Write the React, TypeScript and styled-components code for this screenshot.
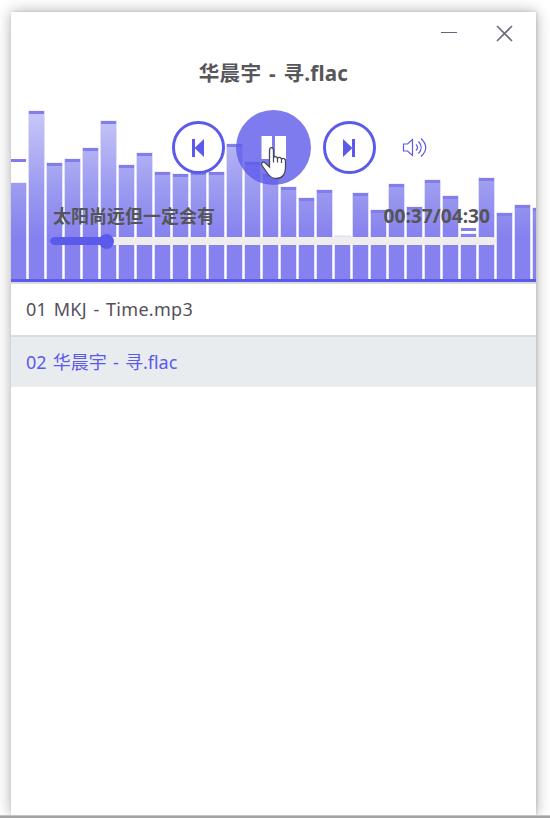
import React from "react";
import styled, { createGlobalStyle } from "styled-components";

const GlobalStyle = createGlobalStyle`
  * { box-sizing: border-box; }
  html, body { margin: 0; background: #fff; overflow: hidden; }
  body { font-family: "Noto Sans", "Noto Sans CJK SC", sans-serif; }
`;

const Desktop = styled.main`
  height: 818px;
  padding: 12px 14px 0 11px;
  overflow: hidden;
  background: #fff;
`;

const PlayerWindow = styled.section`
  height: 803px;
  display: flex;
  flex-direction: column;
  background: #fff;
  box-shadow: 0 0 14px rgba(0, 0, 0, 0.32), 1px 0 3px rgba(0, 0, 0, 0.12);
`;

const TaskEdge = styled.div`
  position: relative;
  height: 3px;
  margin: 0 -14px 0 -11px;
  background: linear-gradient(#c4c4c4 0 1px, #a3a3a3 1px 3px);
`;

const Stage = styled.header`
  position: relative;
  height: 272px;
  flex: none;
  display: flex;
  flex-direction: column;
  border-bottom: 2px solid #dcdcdc;
`;

const Spectrum = styled.svg`
  position: absolute;
  left: 0;
  top: 0;
  width: 525px;
  height: 270px;
`;

const TitleBar = styled.div`
  height: 42px;
  display: flex;
  justify-content: flex-end;
  align-items: center;
  gap: 39px;
  padding-right: 23px;
`;

const WindowButton = styled.button`
  width: 17px;
  height: 17px;
  padding: 0;
  border: 0;
  background: none;
  svg { display: block; }
`;

const Title = styled.h1`
  margin: 0;
  height: 40px;
  line-height: 39px;
  text-align: center;
  font-size: 20.6px;
  font-weight: 700;
  letter-spacing: 0.2px;
  word-spacing: 2.2px;
  color: #57575b;
  white-space: nowrap;
`;

const Controls = styled.div`
  position: relative;
  height: 75px;
  margin-top: 16px;
  display: flex;
  align-items: center;
  gap: 12px;
  padding-left: 161px;
`;

const SkipButton = styled.button`
  width: 52.5px;
  height: 52.5px;
  padding: 0;
  border: 3px solid #5c5aea;
  border-radius: 50%;
  background: #fff;
  svg { display: block; }
`;

const PlayButton = styled.button`
  width: 75px;
  height: 75px;
  margin-left: -0.5px;
  padding: 0;
  border: 0;
  border-radius: 50%;
  background: rgba(92, 90, 234, 0.8);
  svg { display: block; }
`;

const Volume = styled.svg`
  margin-left: 14px;
`;

const Status = styled.div`
  position: relative;
  height: 26px;
  margin-top: 18px;
  padding: 0 46px 0 42px;
  display: flex;
  justify-content: space-between;
  line-height: 26px;
  font-size: 18px;
  font-weight: 700;
  color: #555559;
  white-space: nowrap;
`;

const Lyric = styled.span``;
const Clock = styled.span`
  font-size: 19.2px;
  line-height: 25px;
`;

const Track = styled.div`
  position: relative;
  width: 446px;
  height: 8px;
  margin: 8px 0 0 39px;
  display: flex;
  align-items: center;
  border-radius: 4px;
  background: #eee;
`;

const Played = styled.div`
  width: 57px;
  height: 8px;
  border-radius: 4px;
  background: #5c5aea;
`;

const Thumb = styled.div`
  width: 15px;
  height: 15px;
  margin-left: -8px;
  border-radius: 50%;
  background: #5c5aea;
`;

const Playlist = styled.ul`
  margin: 0;
  padding: 0;
  list-style: none;
`;

const Song = styled.li<{ $active?: boolean }>`
  height: ${(p) => (p.$active ? 50 : 53)}px;
  line-height: ${(p) => (p.$active ? 50 : 51)}px;
  padding-left: 15px;
  border-bottom: ${(p) => (p.$active ? "0" : "2px solid #dcdcdc")};
  font-size: 18px;
  letter-spacing: ${(p) => (p.$active ? 0 : 0.3)}px;
  word-spacing: 1.5px;
  white-space: nowrap;
  color: ${(p) => (p.$active ? "#5c5aea" : "#55505a")};
  background: ${(p) => (p.$active ? "#e8ecef" : "#fff")};
`;

const peaks = [
  147, 99, 151, 147, 136, 109, 153, 141, 160, 162, 160, 160, 132, 150, 162,
  175, 186, 178, 224, 181, 198, 172, 195, 168, 184, 216, 166, 201, 193, 196,
];
const fallen: Record<number, number> = { 0: 171, 25: 222 };

function SpectrumBars() {
  return (
    <Spectrum viewBox="0 0 525 270">
      <defs>
        <linearGradient id="bar" gradientUnits="userSpaceOnUse" x1="0" y1="99" x2="0" y2="226">
          <stop offset="0" stopColor="#c8c8f8" />
          <stop offset="0.6" stopColor="#9d9bf0" />
          <stop offset="1" stopColor="#8681ee" />
        </linearGradient>
      </defs>
      {peaks.map((peak, i) => {
        const top = fallen[i] ?? peak;
        return (
          <g key={i}>
            <rect x={i * 18 - 1} y={top - 0.5} width="17" height={268 - top} fill="#e0dffb" />
            {i !== 18 && <rect x={i * 18} y={top} width="15" height={268 - top} fill="url(#bar)" />}
            {i === 18 && <rect x={i * 18} y={top + 2} width="15" height={266 - top} fill="url(#bar)" />}
            {i !== 18 && <rect x={i * 18} y={peak} width="15" height="3" fill="#817eec" />}
          </g>
        );
      })}
      <rect y="267" width="525" height="3" fill="#5c5aea" />
    </Spectrum>
  );
}

export default function App() {
  return (
    <>
      <GlobalStyle />
      <Desktop>
        <PlayerWindow>
          <Stage>
            <SpectrumBars />
            <TitleBar>
              <WindowButton aria-label="Minimize">
                <svg width="17" height="17" stroke="#66647c"><path d="M1 7.5H17" /></svg>
              </WindowButton>
              <WindowButton aria-label="Close">
                <svg width="17" height="17" stroke="#6b6a78" strokeWidth="1.6"><path d="M1 1L16 16M16 1L1 16" /></svg>
              </WindowButton>
            </TitleBar>
            <Title>华晨宇 - 寻.flac</Title>
            <Controls>
              <SkipButton aria-label="Previous">
                <svg width="46" height="46" fill="#5c5aea"><path d="M17 14h3v18h-3zM19.500 23L29 14V32Z" /></svg>
              </SkipButton>
              <PlayButton aria-label="Pause">
                <svg width="75" height="75">
                  <path d="M25.5 26H36V49H25.5zM39 26H50V49H39z" fill="#fff" />
                  <path d="M33.500 57V40.500c0-3.800 4-3.800 4 0v7c.8-1.600 3.600-1.200 4 .8 1-1.500 3.600-1 4 .8 1.500-1.400 4-.5 4 2V58c0 6-3.200 10.500-9 10.500-4.200 0-6.500-1.500-8.500-4.500l-6-8.500c-1.500-2.200.5-4.200 3-2.800z" fill="#fff" stroke="#48485a" strokeWidth="1.300" />
                  <path d="M37.500 47v5.500M41.500 48v4.500M45.500 49v4" stroke="#48485a" strokeWidth="1.200" />
                </svg>
              </PlayButton>
              <SkipButton aria-label="Next">
                <svg width="46" height="46" fill="#5c5aea"><path d="M26 14h3v18h-3zM26.500 23L17 14V32Z" /></svg>
              </SkipButton>
              <Volume width="25" height="22" fill="none" stroke="#5c5aea" strokeWidth="1.200">
                <path d="M1.500 7H5.500L10.500 2.500V18.500L5.500 14H1.500zM14 7.500Q17 10.500 14 13.500M16.500 4.500Q22 10.500 16.500 16.500M19 1.500Q28.500 10.500 19 19.500" />
              </Volume>
            </Controls>
            <Status>
              <Lyric>太阳尚远但一定会有</Lyric>
              <Clock>00:37/04:30</Clock>
            </Status>
            <Track>
              <Played />
              <Thumb />
            </Track>
          </Stage>
          <Playlist>
            <Song>01 MKJ - Time.mp3</Song>
            <Song $active>02 华晨宇 - 寻.flac</Song>
          </Playlist>
        </PlayerWindow>
        <TaskEdge />
      </Desktop>
    </>
  );
}
